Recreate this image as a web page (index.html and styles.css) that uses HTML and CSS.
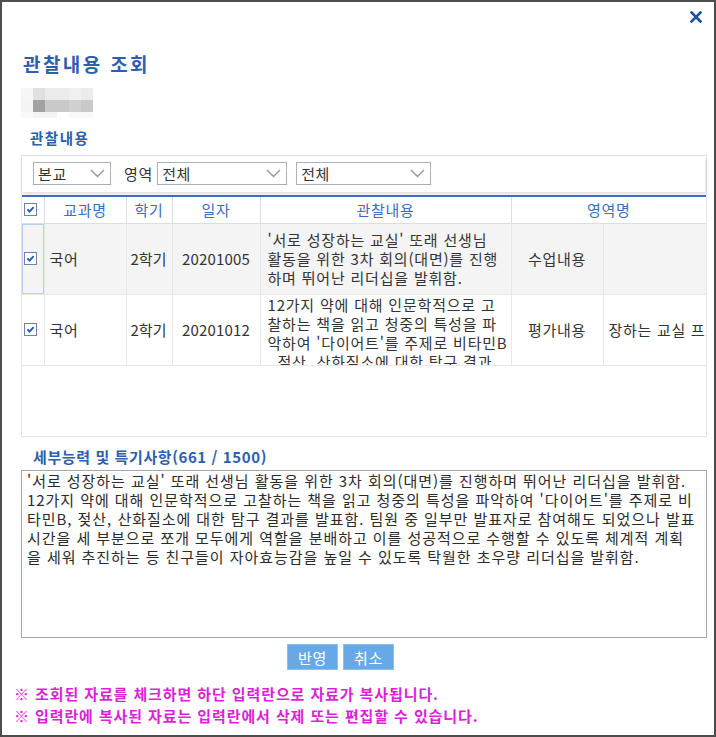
FILE: index.html
```html
<!DOCTYPE html>
<html lang="ko">
<head>
<meta charset="utf-8">
<title>관찰내용 조회</title>
<link rel="stylesheet" href="styles.css">
</head>
<body>
<div class="window">
  <svg class="close" viewBox="0 0 12 12" aria-label="닫기"><path d="M1.5 1.5 L10.5 10.5 M10.5 1.5 L1.5 10.5" stroke="#1c4f9c" stroke-width="2.6" stroke-linecap="square"/></svg>
  <h1 class="title">관찰내용 조회</h1>
  <div class="blur">
    <i class="b1"></i><i class="b2"></i><i class="b3"></i><i class="b3"></i><i class="b4"></i><i class="b3"></i>
    <i class="b5"></i><i class="b6"></i><i class="b7"></i><i class="b7"></i><i class="b8"></i><i class="b7"></i>
    <i class="b9"></i><i class="b5"></i><i class="b5"></i><i class="b0"></i><i class="b9"></i><i class="b9"></i>
  </div>
  <h2 class="subtitle">관찰내용</h2>
  <div class="grid">
    <div class="toolbar">
      <div class="select s1"><span>본교</span><svg class="chev" viewBox="0 0 15 9"><polyline points="1,1 7.5,7.5 14,1" fill="none" stroke="#9a9a9a" stroke-width="1.4"/></svg></div>
      <span class="lbl">영역</span>
      <div class="select s2"><span>전체</span><svg class="chev" viewBox="0 0 15 9"><polyline points="1,1 7.5,7.5 14,1" fill="none" stroke="#9a9a9a" stroke-width="1.4"/></svg></div>
      <div class="select s3"><span>전체</span><svg class="chev" viewBox="0 0 15 9"><polyline points="1,1 7.5,7.5 14,1" fill="none" stroke="#9a9a9a" stroke-width="1.4"/></svg></div>
    </div>
    <table class="tbl">
      <colgroup>
        <col class="c-cb"><col class="c-subj"><col class="c-sem"><col class="c-date"><col class="c-obs"><col class="c-area1"><col class="c-area2">
      </colgroup>
      <thead>
        <tr>
          <th class="cbcell"><span class="cb"></span></th>
          <th>교과명</th>
          <th>학기</th>
          <th>일자</th>
          <th>관찰내용</th>
          <th colspan="2">영역명</th>
        </tr>
      </thead>
      <tbody>
        <tr class="sel">
          <td class="cbcell focus"><span class="cb"></span></td>
          <td class="left">국어</td>
          <td class="sem">2학기</td>
          <td class="num">20201005</td>
          <td class="obs"><div class="clip">'서로 성장하는 교실' 또래 선생님<br>활동을 위한 3차 회의(대면)를 진행<br>하며 뛰어난 리더십을 발휘함.</div></td>
          <td>수업내용</td>
          <td class="nowrap"></td>
        </tr>
        <tr>
          <td class="cbcell"><span class="cb"></span></td>
          <td class="left">국어</td>
          <td class="sem">2학기</td>
          <td class="num">20201012</td>
          <td class="obs"><div class="clip">12가지 약에 대해 인문학적으로 고<br>찰하는 책을 읽고 청중의 특성을 파<br>악하여 '다이어트'를 주제로 비타민B<br>, 젖산, 산화질소에 대한 탐구 결과<br>를 발표함.</div></td>
          <td>평가내용</td>
          <td class="nowrap left">장하는 교실 프로젝트</td>
        </tr>
      </tbody>
    </table>
  </div>
  <h2 class="subtitle detail">세부능력 및 특기사항(661 / 1500)</h2>
  <div class="textarea">'서로 성장하는 교실' 또래 선생님 활동을 위한 3차 회의(대면)를 진행하며 뛰어난 리더십을 발휘함.<br>12가지 약에 대해 인문학적으로 고찰하는 책을 읽고 청중의 특성을 파악하여 '다이어트'를 주제로 비<br>타민B, 젖산, 산화질소에 대한 탐구 결과를 발표함. 팀원 중 일부만 발표자로 참여해도 되었으나 발표<br>시간을 세 부분으로 쪼개 모두에게 역할을 분배하고 이를 성공적으로 수행할 수 있도록 체계적 계획<br>을 세워 추진하는 등 친구들이 자아효능감을 높일 수 있도록 탁월한 초우량 리더십을 발휘함.</div>
  <div class="buttons">
    <button class="btn">반영</button>
    <button class="btn">취소</button>
  </div>
  <div class="notes">
    <p>※ 조회된 자료를 체크하면 하단 입력란으로 자료가 복사됩니다.</p>
    <p>※ 입력란에 복사된 자료는 입력란에서 삭제 또는 편집할 수 있습니다.</p>
  </div>
</div>
</body>
</html>
```
FILE: styles.css
```css
* { box-sizing: border-box; }

body {
  margin: 0;
  background: #fff;
  font-family: "Noto Sans CJK KR", "Noto Sans", sans-serif;
  color: #333;
}

.window {
  position: relative;
  width: 716px;
  height: 737px;
  border: 2px solid #4d4d4d;
  padding: 50px 7px 0 19px;
  overflow: hidden;
}

.close {
  position: absolute;
  top: 9px;
  right: 12px;
  width: 12px;
  height: 12px;
}

.title {
  margin: 0 0 0 2px;
  font-size: 19px;
  line-height: 24px;
  font-weight: 700;
  letter-spacing: 2.4px;
  color: #2e5eae;
}

.blur {
  display: grid;
  grid-template-columns: repeat(6, 12px);
  grid-template-rows: 12px 12px 6px;
  width: 72px;
  margin-top: 12px;
}
.blur i { display: block; }
.b0 { background: #ffffff; }
.b1 { background: #f6f6f6; }
.b2 { background: #e0e0e0; }
.b3 { background: #ebebeb; }
.b4 { background: #f0f0f0; }
.b5 { background: #f4f4f4; }
.b6 { background: #a2a2a2; }
.b7 { background: #c9c9c9; }
.b8 { background: #d0d0d0; }
.b9 { background: #f9f9f9; }

.subtitle {
  margin: 11px 0 0 9px;
  font-size: 14.5px;
  line-height: 18px;
  font-weight: 700;
  letter-spacing: 1.5px;
  color: #2e5eae;
}

.grid {
  margin-top: 8px;
  height: 282px;
  border: 1px solid #e4e4e4;
}

.toolbar {
  display: flex;
  align-items: flex-start;
  height: 35px;
  margin: 1px 1px 0 0;
  padding: 5px 11px 0;
  background: #fff;
  box-shadow: 1px 2px 4px rgba(0, 0, 0, 0.14);
}

.select {
  display: flex;
  align-items: center;
  justify-content: space-between;
  height: 23px;
  padding: 0 5px 0 4px;
  border: 1px solid #aab0bb;
  font-size: 15px;
  letter-spacing: 0.6px;
  color: #333;
  background: #fff;
}
.s1 { width: 78px; }
.s2 { width: 130px; margin-left: 4px; }
.s3 { width: 135px; margin-left: 9px; }
.chev { width: 15px; height: 9px; }

.lbl {
  margin-left: 13px;
  font-size: 15px;
  line-height: 23px;
  letter-spacing: 0.8px;
}

.tbl {
  width: 684px;
  margin-top: 3px;
  border-collapse: collapse;
  table-layout: fixed;
  border-top: 2px solid #3a6ec6;
  font-size: 15px;
  letter-spacing: 0.7px;
}
.c-cb { width: 22px; }
.c-subj { width: 82px; }
.c-sem { width: 46px; }
.c-date { width: 88px; }
.c-obs { width: 251px; }
.c-area1 { width: 92px; }
.c-area2 { width: 103px; }

.tbl th {
  height: 27px;
  padding: 0;
  font-weight: 400;
  color: #3a6cc0;
  text-align: center;
  white-space: nowrap;
  border-left: 1px solid #d9dee7;
  border-bottom: 1px solid #d9dee7;
}
.tbl th:first-child { border-left: none; }

.tbl td {
  height: 71px;
  padding: 0 5px;
  text-align: center;
  vertical-align: middle;
  color: #333;
  border-left: 1px solid #e8e8e8;
  border-bottom: 1px solid #e8e8e8;
  line-height: 19px;
}
.tbl td:first-child { border-left: none; }
.tbl td.left { text-align: left; }
.tbl td.sem { padding: 0 0 0 4px; text-align: left; white-space: nowrap; letter-spacing: 0; }
.tbl td.num { letter-spacing: 0.2px; white-space: nowrap; }
.tbl tr.sel td { background: #f4f4f4; }

.tbl .cbcell { padding: 0 0 0 2px; text-align: left; }
.tbl td.focus { box-shadow: inset 0 0 0 1px #b3d0ef; }

.cb {
  display: block;
  width: 13px;
  height: 13px;
  border: 1px solid #6f84a3;
  background: #fff url("data:image/svg+xml,%3Csvg xmlns='http://www.w3.org/2000/svg' viewBox='0 0 11 11'%3E%3Cpath d='M2.4 5.4 L4.6 7.6 L8.6 3.2' fill='none' stroke='%231f5fbf' stroke-width='2'/%3E%3C/svg%3E") center / 11px 11px no-repeat;
}

.tbl td.obs { text-align: left; padding: 0 2px 0 7px; letter-spacing: 0.8px; }
.clip { max-height: 70px; overflow: hidden; white-space: nowrap; }
.tbl td.nowrap { white-space: nowrap; overflow: hidden; text-overflow: clip; }

.detail {
  margin: 10px 0 0 12px;
  line-height: 20px;
  font-size: 15px;
  letter-spacing: 0.6px;
}

.textarea {
  height: 168px;
  margin-top: 3px;
  padding: 0 5px;
  border: 1px solid #a8a8a8;
  font-size: 15px;
  line-height: 19px;
  letter-spacing: 0.95px;
  white-space: nowrap;
  color: #2b2b2b;
}

.buttons {
  display: flex;
  gap: 5px;
  margin-top: 6px;
  padding-left: 266px;
}
.btn {
  width: 51px;
  height: 26px;
  padding: 0;
  border: 1px solid #8dbfee;
  background: #67a9e6;
  color: #fff;
  font-family: inherit;
  font-size: 15px;
  letter-spacing: 0.8px;
}

.notes {
  margin: 13px 0 0 -7px;
}
.notes p {
  margin: 0;
  font-size: 15px;
  line-height: 22px;
  font-weight: 700;
  letter-spacing: 0.9px;
  color: #dc1fd8;
}
```
